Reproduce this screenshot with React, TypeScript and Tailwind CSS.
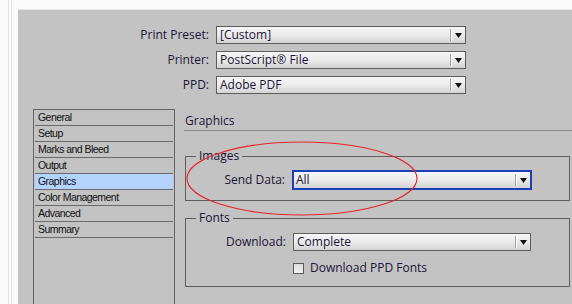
import React from 'react';

const Arrow = () => (
  <div className="flex items-center h-full">
    <div className="w-px h-[12px] bg-[#a0a0a0] border-r border-white box-content" />
    <svg width="7" height="5" viewBox="0 0 7 5" className="ml-[3px] mr-[3px]">
      <path d="M0 0 H7 L3.5 5 Z" fill="#111" />
    </svg>
  </div>
);

const Dropdown = ({ value, w, focused }: { value: string; w: string; focused?: boolean }) => (
  <div
    className={`${w} flex items-center justify-between bg-gradient-to-b from-[#f6f6f6] via-[#ebebeb] to-[#d4d4d4] ${
      focused ? 'h-[20px] border-2 border-[#1d3fb5] pl-[2px]' : 'h-[18px] border border-[#5c5c5c] pl-[3px]'
    }`}
  >
    <span className="text-[12px] leading-none text-[#1b1537] whitespace-nowrap">{value}</span>
    <Arrow />
  </div>
);

const items = ['General', 'Setup', 'Marks and Bleed', 'Output', 'Graphics', 'Color Management', 'Advanced', 'Summary'];

export default function App() {
  return (
    <div className="w-[572px] h-[304px] bg-[#fbfbfb] flex overflow-hidden relative font-['Open_Sans',sans-serif] text-[#1b1537]">
      <div className="w-[18px] shrink-0 flex">
        <div className="ml-[8px] w-[4px] h-full border-l border-r border-[#e2e2e2]" />
      </div>
      <div className="flex-1 flex flex-col pt-[9px]">
        <div className="flex-1 bg-[#c3c3c3] border-t border-[#e6e6e6] flex flex-col">
          {/* top selectors */}
          <div className="flex flex-col gap-[7px] pt-[16px]">
            {[
              ['Print Preset:', '[Custom]'],
              ['Printer:', 'PostScript® File'],
              ['PPD:', 'Adobe PDF'],
            ].map(([label, value]) => (
              <div key={label} className="flex items-center">
                <div className="w-[191px] text-right text-[12px] leading-none">{label}</div>
                <div className="ml-[7px]">
                  <Dropdown value={value} w="w-[250px]" />
                </div>
              </div>
            ))}
          </div>

          <div className="flex-1 flex mt-[15px] pl-[15px]">
            {/* side list */}
            <div className="w-[142px] border border-[#666] border-b-0 flex flex-col px-px">
              {items.map((it) => (
                <div
                  key={it}
                  className={`h-[16px] border-b border-[#6a6a6a] pl-[3px] flex items-center text-[10.5px] tracking-[-0.55px] font-['Liberation_Sans',sans-serif] text-[#101010] ${
                    it === 'Graphics' ? 'bg-[#b4d4ff]' : ''
                  }`}
                >
                  {it}
                </div>
              ))}
            </div>

            {/* right pane */}
            <div className="flex-1 ml-[9px] flex flex-col">
              <div className="h-[22px] border-b border-[#8c8c8c] pl-[1px] pt-[3px] text-[12px] leading-none flex items-start">
                <span className="mt-[3px]">Graphics</span>
              </div>

              <div className="relative mt-[25px] ml-[1px] mr-[2px] h-[45px] border border-[#5e5e5e]">
                <span className="absolute left-[10px] -top-[9px] px-[3px] bg-[#c3c3c3] text-[12px] leading-[16px]">Images</span>
                <div className="flex items-center pt-[13px]">
                  <div className="w-[99px] text-right text-[12px] leading-none">Send Data:</div>
                  <div className="ml-[7px]">
                    <Dropdown value="All" w="w-[240px]" focused />
                  </div>
                </div>
              </div>

              <div className="relative mt-[17px] ml-[1px] mr-[2px] h-[69px] border border-[#5e5e5e]">
                <span className="absolute left-[10px] -top-[9px] px-[3px] bg-[#c3c3c3] text-[12px] leading-[16px]">Fonts</span>
                <div className="flex items-center pt-[14px]">
                  <div className="w-[100px] text-right text-[12px] leading-none">Download:</div>
                  <div className="ml-[7px]">
                    <Dropdown value="Complete" w="w-[238px]" />
                  </div>
                </div>
                <div className="flex items-center mt-[11px] ml-[107px]">
                  <div className="w-[11px] h-[11px] border border-[#5a5a5a] bg-gradient-to-b from-[#dcdcdc] to-[#f2f2f2]" />
                  <span className="ml-[6px] text-[12px] leading-none">Download PPD Fonts</span>
                </div>
              </div>
            </div>
          </div>
        </div>
      </div>

      <svg className="absolute left-0 top-0 pointer-events-none" width="572" height="304">
        <ellipse cx="302" cy="178.5" rx="115" ry="36.5" fill="none" stroke="#e8232a" strokeWidth="1.1" />
      </svg>
    </div>
  );
}
